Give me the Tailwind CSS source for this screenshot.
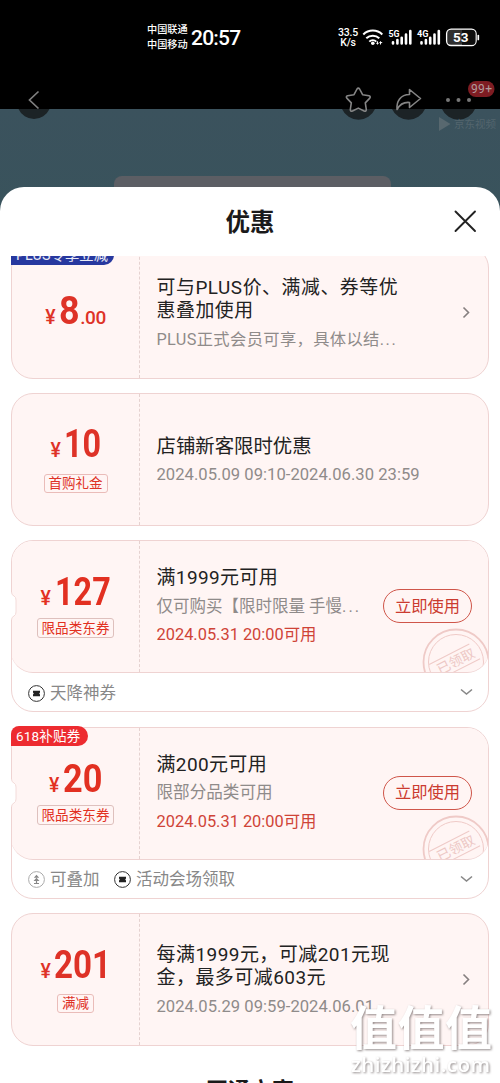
<!DOCTYPE html>
<html lang="zh-CN">
<head>
<meta charset="utf-8">
<title>优惠</title>
<script src="https://cdn.jsdelivr.net/npm/@tailwindcss/browser@4"></script>
</head>
<body class="bg-black">
<div class="relative w-[500px] h-[1083px] overflow-hidden bg-black font-[Roboto,'Noto_Sans_CJK_SC',sans-serif] whitespace-nowrap flex flex-col">

  <!-- status bar -->
  <div class="h-[75px] shrink-0 flex text-white pl-[147px]">
    <div class="w-[43px] pt-[22px] text-[10.2px] leading-[15px] font-medium"><div>中国联通</div><div>中国移动</div></div>
    <div class="w-[148px] pl-[1px] pt-[24px] text-[21px] leading-[28px] font-medium tracking-[-0.8px]">20:57</div>
    <div class="w-[20px] pt-[28px] text-[10.5px] leading-[10px] font-medium text-center tracking-[-0.2px]"><div>33.5</div><div>K/s</div></div>
    <svg class="w-[142px] h-[75px]" viewBox="358 0 142 75" fill="none" stroke="#fff">
      <path d="M363.3 34.5a13.5 13.5 0 0 1 19 0M366.3 38.3a9.3 9.3 0 0 1 13 0" stroke-width="2"/>
      <path d="M369.3 41.6a5 5 0 0 1 7 0" stroke-width="2"/>
      <circle cx="372.8" cy="43.3" r="1.8" fill="#fff" stroke="none"/>
      <path d="M377.5 41.3v3.2M380.5 41.3v3.2M376.3 43.3h2.4M379.4 42.6h2.8" stroke-width="1"/>
      <g stroke-width="2.6" stroke-linecap="round">
        <path d="M393 42.3v1.2M397.4 40v3.5M401.7 37.8v5.7M406 34.5v9M410.3 31v12.5"/>
        <path d="M421.5 42.3v1.2M425.9 40v3.5M430.2 37.8v5.7M434.5 34.5v9M438.8 31v12.5"/>
      </g>
      <g fill="#fff" stroke="none" font-family="Roboto" font-weight="700" font-size="9.5">
        <text x="388.5" y="36.8" textLength="11" lengthAdjust="spacingAndGlyphs">5G</text>
        <text x="417" y="36.8" textLength="11.5" lengthAdjust="spacingAndGlyphs">4G</text>
      </g>
      <rect x="446.6" y="29.2" width="29.5" height="16.3" rx="4.5" fill="#303030" stroke-width="1.3"/>
      <path d="M462 30h10a3.5 3.5 0 0 1 3.5 3.5v8a3.5 3.5 0 0 1-3.5 3.5h-10z" fill="#000" stroke="none" opacity=".7"/>
      <path d="M478.3 35.5v4" stroke-width="1.7" stroke-linecap="round"/>
      <text x="453" y="42.3" font-family="Roboto" font-weight="700" font-size="13.5" fill="#fff" stroke="none" textLength="15.5">53</text>
    </svg>
  </div>

  <!-- dimmed page behind the sheet -->
  <svg class="absolute left-0 top-[75px] w-[500px] h-[140px]" viewBox="0 75 500 140" fill="none">
    <defs><linearGradient id="sea" x1="0" y1="0" x2="0" y2="1"><stop stop-color="#3b525d"/><stop offset="1" stop-color="#39535c"/></linearGradient></defs>
    <rect y="109" width="500" height="110" fill="url(#sea)"/>
    <rect x="114" y="176" width="277" height="30" rx="8" fill="#5c5e64"/>
    <g fill="#1c2326">
      <path d="M18.5 109h31a17 17 0 0 1-31 0z"/><path d="M342 109h33a18 18 0 0 1-33 0z"/>
      <path d="M392 109h33a18 18 0 0 1-33 0z"/><path d="M442 109h33a18 18 0 0 1-33 0z"/>
    </g>
    <path d="M38.5 91.5 29.5 100l9 8.5" stroke="#7f7f7f" stroke-width="1.7"/>
    <path d="M357 89q1.3-1.8 2.6 0l3 5.7 6.400 1.100q2 .6.800 2.300l-4.500 4.800 1 6.600q0 2.200-2.200 1.500l-5.800-2.900-5.800 2.900q-2.200.7-2.200-1.500l1-6.600-4.500-4.800q-1.200-1.700.8-2.300l6.400-1.100z" stroke="#858585" stroke-width="1.6" stroke-linejoin="round"/>
    <path d="M409.5 89.500 420.500 98.500l-11 9v-5c-5-.5-9.500 1.500-12.500 7-.7-8 3.500-15 12.500-15z" stroke="#858585" stroke-width="1.6" stroke-linejoin="round"/>
    <g fill="#777"><circle cx="448" cy="100" r="2"/><circle cx="458.500" cy="100" r="2"/><circle cx="469" cy="100" r="2"/></g>
    <rect x="468" y="81" width="26.500" height="16" rx="8" fill="#7e1c22"/>
    <text x="471" y="93.200" font-family="Roboto" font-size="12" fill="#b09a9c" textLength="21">99+</text>
    <path d="M439 117l11.500 7-11.500 7z" fill="#58686f"/>
    <text x="454" y="128" font-family="Noto Sans CJK SC" font-size="10.500" fill="#53656e">京东视频</text>
  </svg>

  <!-- bottom sheet -->
  <section class="relative mt-[112px] h-[896px] shrink-0 bg-white rounded-t-[24px] flex flex-col">
    <header class="h-[69px] shrink-0 relative flex justify-center pt-[18px] text-[24.5px] leading-[36px] font-bold text-[#1a1a1a]">优惠
      <svg class="absolute left-[454px] top-[23px] w-[23px] h-[23px]" viewBox="0 0 23 23" stroke="#222" stroke-width="1.9" stroke-linecap="round"><path d="M1.5 1.5l19.500 19.500M21 1.500l-19.500 19.500"/></svg>
    </header>

    <div class="flex-1 overflow-hidden px-[11px]">
      <!-- PLUS -->
      <article class="-mt-[10px] h-[132.5px] flex relative rounded-[22px] border border-[#efd3d2] bg-[#fff5f4]">
        <div class="absolute -left-px -top-px h-[19px] w-[103px] bg-[#27389f] rounded-tl-[8px] rounded-br-[10px] text-white/90 text-[14.3px] leading-[19px] pl-[5px] tracking-[0.1px]">PLUS专享立减</div>
        <div class="w-[127px] flex justify-center items-baseline pt-[41px] text-[#de3227] h-[90px]">
          <span class="text-[19.5px] font-medium w-[14px] leading-[46px]">¥</span><span class="text-[39px] leading-[46px] font-bold w-[21px] origin-left scale-x-[.92]">8</span><span class="text-[19px] font-medium leading-[46px] tracking-[-0.4px]">.00</span>
        </div>
        <div class="border-l border-dashed border-[#e5d2d0]"></div>
        <div class="flex-1 pl-[16.5px] pt-[28.5px] text-[18.9px] leading-[23px] text-[#222] tracking-[0.55px]">
          <div>可与PLUS价、满减、券等优</div><div>惠叠加使用</div>
          <div class="mt-[6px] text-[16.3px] text-[#8f8b8a] tracking-[0.35px]">PLUS正式会员可享，具体以结<span class="tracking-[1.6px]">...</span></div>
        </div>
        <svg class="absolute left-[450px] top-[59px] w-[9px] h-[13px]" fill="none" stroke="#857f7f" stroke-width="1.6"><path d="M1.5 1.5 6.500 6.500l-5 5"/></svg>
      </article>

      <!-- new customer -->
      <article class="mt-[14.5px] h-[132.5px] flex rounded-[22px] border border-[#efd3d2] bg-[#fff5f4]">
        <div class="w-[127px] flex flex-col items-center pt-[27px] text-[#de3227]">
          <div class="flex items-baseline h-[46px] leading-[46px]"><span class="w-[13px] text-[19.5px] font-medium">¥</span><span class="w-[37px] text-[39px] font-bold origin-left scale-x-[.83]">10</span></div>
          <div class="mt-[7px] h-[19px] px-[4px] border border-[#eabcb9] rounded-[3px] text-[13.5px] leading-[17px]">首购礼金</div>
        </div>
        <div class="border-l border-dashed border-[#e5d2d0]"></div>
        <div class="pl-[16.5px] pt-[38px] leading-[29px]">
          <div class="text-[19.4px] text-[#222]">店铺新客限时优惠</div>
          <div class="-mt-px text-[16.6px] text-[#8f8b8a] tracking-[0.03px]">2024.05.09 09:10-2024.06.30 23:59</div>
        </div>
      </article>

      <!-- 127 -->
      <article class="relative mt-[14.5px] h-[172px] overflow-hidden rounded-[22px] border border-[#efd3d2] bg-white">
        <div class="relative -mx-px -mt-px h-[133px] pl-px pt-px flex rounded-[22px] border-b border-[#efd3d2] bg-[#fff5f4] overflow-hidden">
          <div class="w-[127px] flex flex-col items-center pt-[28px] text-[#e23021]">
            <div class="flex items-baseline h-[46px] leading-[46px]"><span class="w-[14px] text-[19.5px] font-medium">¥</span><span class="w-[56px] text-[39px] font-bold origin-left scale-x-[.83]">127</span></div>
            <div class="mt-[3px] h-[20px] px-[4px] border border-[#dec0bd] rounded-[3px] text-[13.6px] leading-[18px]">限品类东券</div>
          </div>
          <div class="border-l border-dashed border-[#e5d2d0]"></div>
          <div class="pl-[16.5px] pt-[23px] leading-[28.5px]">
            <div class="text-[19px] text-[#222] tracking-[0.35px]">满1999元可用</div>
            <div class="text-[16.5px] text-[#8f8b8a]">仅可购买【限时限量 手慢<span class="tracking-[2px]">...</span></div>
            <div class="text-[16.4px] text-[#cf4337]">2024.05.31 20:00可用</div>
          </div>
          <svg class="absolute left-[411px] top-[87px] w-[68px] h-[68px]" viewBox="0 0 68 68" fill="none" stroke="#efcac7"><circle cx="34" cy="35" r="32.500" stroke-width="1.800"/><circle cx="34" cy="35" r="27.500"/><g transform="rotate(-27 34 35)"><path d="M9 25h45M9 43h48"/><text x="14" y="39" font-family="Noto Sans CJK SC" font-size="13.500" fill="#edc8c5" stroke="none">已领取</text></g></svg>
          <button class="absolute left-[372px] top-[49px] w-[89px] h-[34px] rounded-full border-[1.5px] border-[#cf5549] text-[#cb3b30] text-[16.3px] leading-[31px]">立即使用</button>
        </div>
        <div class="flex items-center h-[40px] pl-[15.5px] text-[16.5px] text-[#888]">
          <svg class="w-[17px] h-[17px] mr-[5.5px]" viewBox="0 0 17 17" fill="none"><circle cx="8.500" cy="8.500" r="7.900" stroke="#333"/><path d="M5 5.800h7v1.800l-.8.900.8.900v1.800H5V9.400l.8-.9L5 7.600z" fill="#222"/></svg><span class="pt-[2px]">天降神券</span>
          <svg class="absolute left-[448px] top-[147px] w-[13px] h-[9px]" fill="none" stroke="#888" stroke-width="1.6"><path d="M1 1.5l5.500 4.500L12 1.500"/></svg>
        </div>
      </article>
      <div class="relative h-0"><svg class="absolute -left-[1px] -top-[120px] w-[8px] h-[30px]"><path d="M0 0h1.500q0 3 2.500 4 2 1 2 4v12q0 3-2 4-2.500 1-2.500 4H0" fill="#fff"/><path d="M1.500 0q0 3 2.500 4 2 1 2 4v12q0 3-2 4-2.500 1-2.500 4" fill="none" stroke="#f3dcda"/></svg></div>

      <!-- 20 -->
      <article class="relative mt-[14.5px] h-[172.5px] overflow-hidden rounded-[22px] border border-[#efd3d2] bg-white">
        <div class="relative -mx-px -mt-px h-[133px] pl-px pt-px flex rounded-[22px] border-b border-[#efd3d2] bg-[#fff5f4] overflow-hidden">
          <div class="w-[127px] flex flex-col items-center pt-[28px] text-[#e23021]">
            <div class="flex items-baseline h-[46px] leading-[46px]"><span class="w-[14px] text-[19.5px] font-medium">¥</span><span class="w-[39px] text-[39px] font-bold origin-left scale-x-[.88]">20</span></div>
            <div class="mt-[3px] h-[20px] px-[4px] border border-[#dec0bd] rounded-[3px] text-[13.6px] leading-[18px]">限品类东券</div>
          </div>
          <div class="border-l border-dashed border-[#e5d2d0]"></div>
          <div class="pl-[16.5px] pt-[23px] leading-[28.5px]">
            <div class="text-[19px] text-[#222] tracking-[0.35px]">满200元可用</div>
            <div class="text-[16.6px] text-[#8f8b8a]">限部分品类可用</div>
            <div class="text-[16.4px] text-[#cf4337]">2024.05.31 20:00可用</div>
          </div>
          <svg class="absolute left-[411px] top-[87px] w-[68px] h-[68px]" viewBox="0 0 68 68" fill="none" stroke="#efcac7"><circle cx="34" cy="35" r="32.500" stroke-width="1.800"/><circle cx="34" cy="35" r="27.500"/><g transform="rotate(-27 34 35)"><path d="M9 25h45M9 43h48"/><text x="14" y="39" font-family="Noto Sans CJK SC" font-size="13.500" fill="#edc8c5" stroke="none">已领取</text></g></svg>
          <button class="absolute left-[372px] top-[49px] w-[89px] h-[34px] rounded-full border-[1.5px] border-[#cf5549] text-[#cb3b30] text-[16.3px] leading-[31px]">立即使用</button>
        </div>
        <div class="flex items-center h-[40px] pl-[15.5px] text-[16.5px] text-[#888]">
          <svg class="w-[17px] h-[17px] mr-[5.5px]" viewBox="0 0 17 17" fill="none"><circle cx="8.500" cy="8.500" r="7.900" stroke="#aaa"/><path d="M8.500 3.800 5.800 6.800h5.400zM8.500 6.800 5.500 10h6zM7.900 10h1.200v2H7.900zM6 11.900h5v1H6z" fill="#888"/></svg><span class="pt-[2px]">可叠加</span>
          <svg class="w-[17px] h-[17px] ml-[14px] mr-[5.5px]" viewBox="0 0 17 17" fill="none"><circle cx="8.500" cy="8.500" r="7.900" stroke="#333"/><path d="M5 5.800h7v1.800l-.8.900.8.900v1.800H5V9.400l.8-.9L5 7.600z" fill="#222"/></svg><span class="pt-[2px]">活动会场领取</span>
          <svg class="absolute left-[448px] top-[147px] w-[13px] h-[9px]" fill="none" stroke="#888" stroke-width="1.6"><path d="M1 1.5l5.500 4.500L12 1.500"/></svg>
        </div>
      </article>
      <div class="relative h-0">
        <svg class="absolute -left-[1px] -top-[120px] w-[8px] h-[30px]"><path d="M0 0h1.500q0 3 2.500 4 2 1 2 4v12q0 3-2 4-2.500 1-2.500 4H0" fill="#fff"/><path d="M1.500 0q0 3 2.500 4 2 1 2 4v12q0 3-2 4-2.500 1-2.500 4" fill="none" stroke="#f3dcda"/></svg>
        <div class="absolute left-0 -top-[173px] w-[77px] h-[20px] rounded-tl-[8px] rounded-r-[10px] bg-[#ed2b30] text-white text-[13.5px] leading-[20px] pl-[5px] tracking-[0.2px]">618补贴券</div>
      </div>

      <!-- 201 -->
      <article class="relative mt-[14px] h-[133px] flex rounded-[22px] border border-[#efd3d2] bg-[#fff5f4]">
        <div class="w-[127px] flex flex-col items-center pt-[27.5px] text-[#de3227]">
          <div class="flex items-baseline h-[46px] leading-[46px]"><span class="w-[13px] text-[19.5px] font-medium">¥</span><span class="w-[57px] text-[39px] font-bold origin-left scale-x-[.85]">201</span></div>
          <div class="mt-[6.5px] h-[19px] px-[4px] border border-[#eabcb9] rounded-[3px] text-[13.5px] leading-[17px]">满减</div>
        </div>
        <div class="border-l border-dashed border-[#e5d2d0]"></div>
        <div class="pl-[16.5px] pt-[29px] text-[19px] leading-[23px] text-[#222] tracking-[0.45px]">
          <div>每满1999元，可减201元现</div><div>金，最多可减603元</div>
          <div class="mt-[6px] text-[16.6px] text-[#8f8b8a] tracking-[0.03px]">2024.05.29 09:59-2024.06.01</div>
        </div>
        <svg class="absolute left-[450px] top-[59px] w-[9px] h-[13px]" fill="none" stroke="#857f7f" stroke-width="1.6"><path d="M1.5 1.5 6.500 6.500l-5 5"/></svg>
      </article>
      <div class="mt-[28.5px] text-center text-[22px] leading-[32px] font-bold text-[#1a1a1a]">开通立享</div>
    </div>
  </section>

  <!-- site watermark -->
  <svg class="absolute left-[340px] top-[995px] w-[160px] h-[88px]" viewBox="340 995 160 88" fill="#fff" style="filter:drop-shadow(1px 1.5px 1px rgba(90,80,80,.65))">
    <text x="350" y="1045" font-family="Noto Sans CJK SC" font-weight="700" font-size="47" textLength="142">值值值</text>
    <text x="351" y="1072" font-family="Open Sans" font-weight="600" font-size="20.500" textLength="139">zhizhizhi.com</text>
  </svg>
</div>
</body>
</html>
